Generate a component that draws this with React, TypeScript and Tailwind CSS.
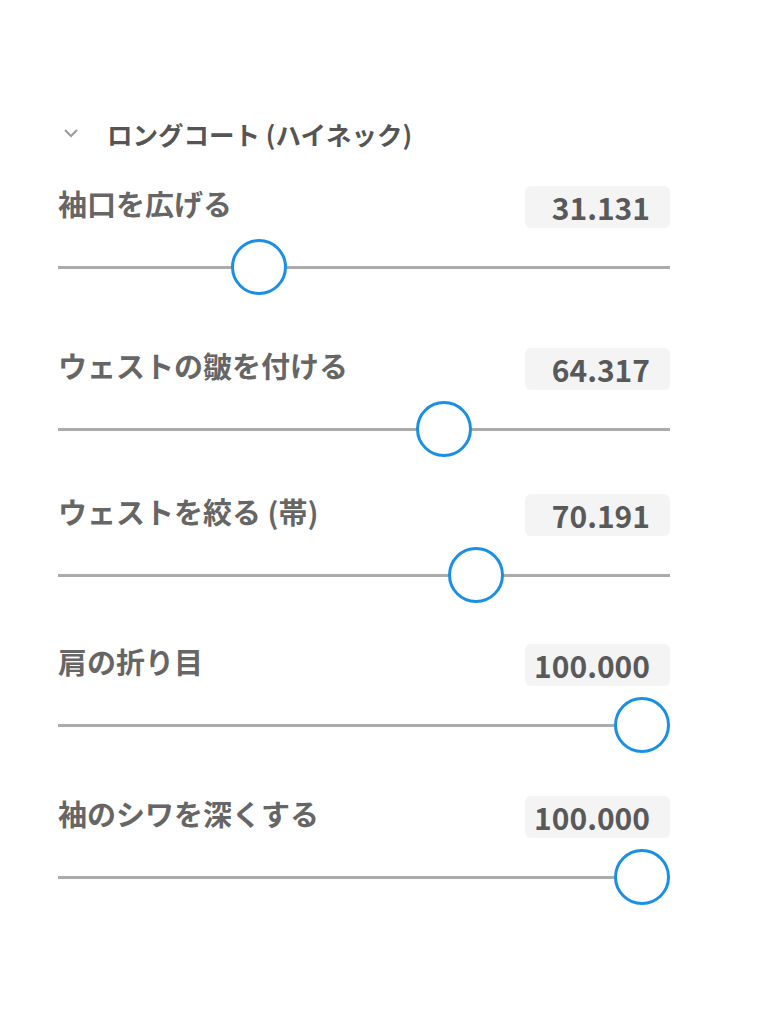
import React from 'react';

type Param = {
  label: string;
  value: number;
  gap: string;
};

const params: Param[] = [
  { label: '袖口を広げる', value: 31.131, gap: 'mt-[36px]' },
  { label: 'ウェストの皺を付ける', value: 64.317, gap: 'mt-[53px]' },
  { label: 'ウェストを絞る (帯)', value: 70.191, gap: 'mt-[37px]' },
  { label: '肩の折り目', value: 100, gap: 'mt-[41px]' },
  { label: '袖のシワを深くする', value: 100, gap: 'mt-[43px]' },
];

function Slider({ value }: { value: number }) {
  // thumb is 56px wide, so its center runs from 28px to (width - 28px)
  const pct = value / 100;
  return (
    <div className="relative h-[56px] w-full">
      <div className="absolute left-0 right-0 top-[27px] h-[3px] bg-[#ababab]" />
      <div
        className="absolute top-0 h-[56px] w-[56px] rounded-full border-[3.5px] border-[#1a8fe6] bg-white"
        style={{ left: `calc((100% - 56px) * ${pct})` }}
      />
    </div>
  );
}

function ParamRow({ param }: { param: Param }) {
  return (
    <div className={param.gap}>
      <div className="flex h-[42px] items-center justify-between">
        <span className="pb-[7px] text-[29px] font-bold leading-none text-[#666666]">{param.label}</span>
        <div className="flex h-[42px] w-[145px] items-center justify-end rounded-md bg-[#f4f4f4] pr-[20px]">
          <span className="pb-[1px] text-[30px] font-semibold leading-none text-[#595959]">
            {param.value.toFixed(3)}
          </span>
        </div>
      </div>
      <div className="mt-[11px]">
        <Slider value={param.value} />
      </div>
    </div>
  );
}

export default function App() {
  return (
    <div
      className="h-[1024px] w-[768px] bg-white pl-[58px] pr-[98px] pt-[120px]"
      style={{ fontFamily: '"Noto Sans CJK JP", "Noto Sans", sans-serif' }}
    >
      <div className="flex h-[30px] items-center">
        <svg width="16" height="10" viewBox="0 0 16 10" className="mb-[4px] ml-[5px]">
          <path d="M2 2 L8 8 L14 2" fill="none" stroke="#9a9a9a" strokeWidth="2" />
        </svg>
        <span className="ml-[28px] pb-[2px] text-[25.5px] font-bold leading-none text-[#555555]">
          ロングコート (ハイネック)
        </span>
      </div>
      {params.map((p) => (
        <ParamRow key={p.label} param={p} />
      ))}
    </div>
  );
}
